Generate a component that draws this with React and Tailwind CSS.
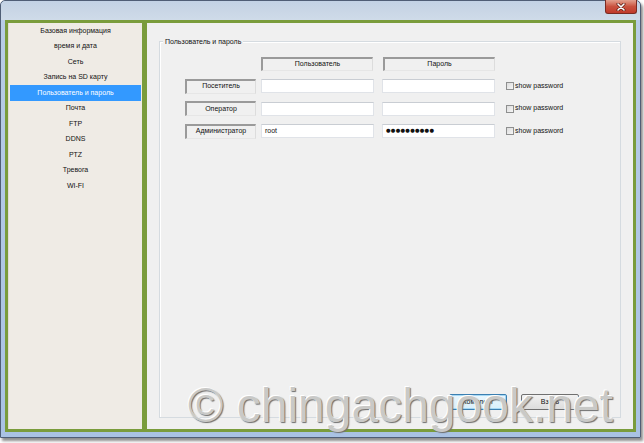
export default function App() {
  const items = [
    "Базовая информация",
    "время и дата",
    "Сеть",
    "Запись на SD карту",
    "Пользователь и пароль",
    "Почта",
    "FTP",
    "DDNS",
    "PTZ",
    "Тревога",
    "WI-FI",
  ];
  const rows = [
    { label: "Посетитель", user: "", pass: "" },
    { label: "Оператор", user: "", pass: "" },
    { label: "Администратор", user: "root", pass: "●●●●●●●●●●" },
  ];
  const sunken =
    "flex items-center justify-center bg-[#f0f0f0] border-t-2 border-l-2 border-r border-b border-t-[#9a9a9a] border-l-[#9a9a9a] border-r-[#dcdcdc] border-b-[#e6e6e6]";
  const input =
    "h-[14px] bg-white border border-[#e0e3e8] border-t-[#c9cdd3] flex items-center px-[3px]";
  return (
    <div className="w-[644px] h-[443px] bg-white relative overflow-hidden font-['Liberation_Sans',Arial,sans-serif] text-[7px] text-[#111111]">
      <div className="w-[641px] h-[438px] flex flex-col border border-[#4f5e76] rounded-t-[5px] bg-gradient-to-b from-[#b9cde6] to-[#a9c2e3] shadow-[2px_3px_3px_rgba(0,0,0,0.45)]">
        {/* title bar */}
        <div className="h-[19px] shrink-0 flex justify-end rounded-t-[5px] bg-gradient-to-b from-[#c2d2e5] via-[#c9d6e6] to-[#cfdbe9]">
          <div className="-mt-[1px] mr-[3px] w-[32px] h-[14px] rounded-b-[3px] border border-[#7a2b22] border-t-0 bg-gradient-to-b from-[#e2a08f] via-[#c9523f] to-[#c0392b] flex items-center justify-center">
            <svg width="10" height="8" viewBox="0 0 10 8">
              <path d="M2 1 L8 7 M8 1 L2 7" stroke="#5a1a12" strokeWidth="3" strokeLinecap="round" />
              <path d="M2 1 L8 7 M8 1 L2 7" stroke="#ffffff" strokeWidth="1.6" strokeLinecap="round" />
            </svg>
          </div>
        </div>
        {/* content */}
        <div className="flex-1 flex mx-[4px] mb-[5px] border-[3px] border-[#7a9c3c] bg-[#f0f0f0]">
          {/* left menu */}
          <div className="w-[134px] shrink-0 bg-[#efebe5] border-l border-[#e0ddd6] flex flex-col">
            {items.map((it, i) => (
              <div
                key={it}
                className={
                  i === 4
                    ? "h-[15.5px] ml-[1px] mr-[1px] flex items-center justify-center bg-[#3399ff] text-white"
                    : "h-[15.5px] flex items-center justify-center"
                }
              >
                {it}
              </div>
            ))}
          </div>
          <div className="w-[5px] shrink-0 bg-[#7a9c3c]" />
          {/* right panel */}
          <div className="flex-1 flex flex-col pt-[18px] pl-[12px] pr-[12px] pb-[11px] bg-[#f0f0f0]">
            <div className="flex-1 relative flex flex-col border border-[#d5dbe0] shadow-[inset_1px_1px_0_#ffffff]">
              <div className="absolute -top-[5px] left-[3px] px-[2px] leading-[9px] bg-[#f0f0f0]">
                Пользователь и пароль
              </div>
              <div className="pt-[15px] pl-[25px] flex flex-col gap-[7.5px]">
                <div className="flex h-[14px]">
                  <div className="w-[71px] mr-[5px]" />
                  <div className={sunken + " w-[112px] h-[14px]"}>Пользователь</div>
                  <div className={sunken + " w-[112px] h-[14px] ml-[10px]"}>Пароль</div>
                </div>
                {rows.map((r) => (
                  <div key={r.label} className="flex h-[15px] items-center">
                    <div className={sunken + " w-[71px] h-[15px] mr-[5px]"}>{r.label}</div>
                    <div className={input + " w-[113px]"}>{r.user}</div>
                    <div className={input + " w-[113px] ml-[8px] font-['DejaVu_Sans',sans-serif] tracking-[0.3px] text-[5.2px]"}>
                      {r.pass}
                    </div>
                    <div className="ml-[11px] w-[8px] h-[8px] border border-[#8e8f8f] bg-gradient-to-br from-[#dcdcdc] to-[#f6f6f6]" />
                    <div className="ml-[1px]">show password</div>
                  </div>
                ))}
              </div>
              <div className="mt-auto flex justify-end pr-[41px] pb-[7px] gap-[14px]">
                <div className="w-[58px] h-[16px] rounded-[2px] border border-[#3c7fb1] shadow-[inset_0_0_0_1px_#a6d8f4] bg-gradient-to-b from-[#eaf6fd] to-[#d9f0fc] flex items-center justify-center">
                  Комплект
                </div>
                <div className="w-[58px] h-[16px] rounded-[2px] border border-[#707070] bg-gradient-to-b from-[#f2f2f2] to-[#dddddd] flex items-center justify-center">
                  Взять
                </div>
              </div>
            </div>
          </div>
        </div>
      </div>
      {/* watermark */}
      <div className="absolute left-[188px] top-[382px] text-[48px] leading-none whitespace-nowrap text-[#c9c9c7] [text-shadow:-1px_-1px_0_#ffffff,1px_1px_1px_#6e6e6e]">
        © chingachgook.net
      </div>
    </div>
  );
}
